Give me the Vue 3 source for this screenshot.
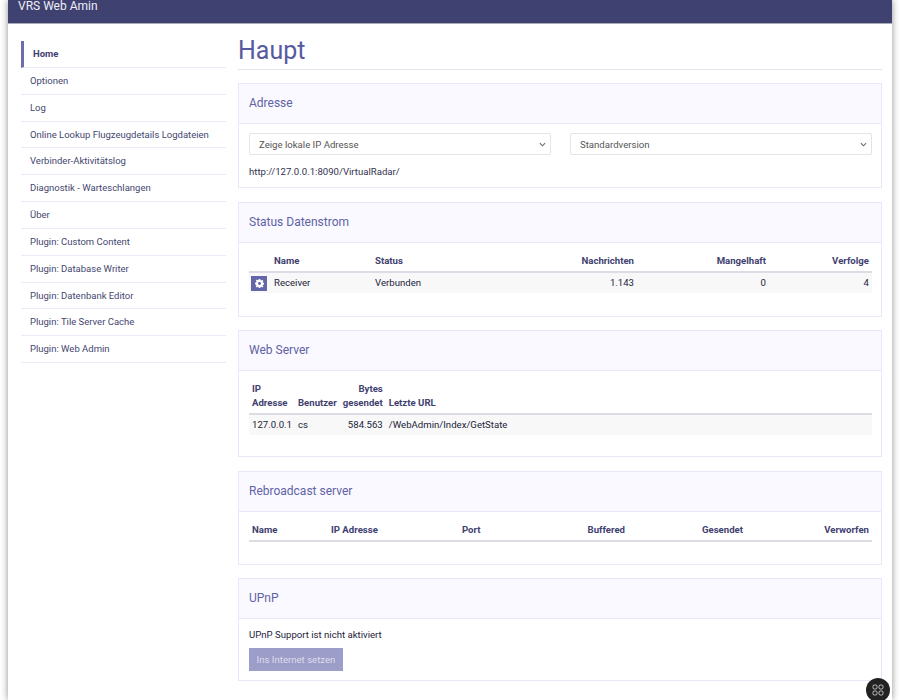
<script setup>
const navItems = [
  'Home', 'Optionen', 'Log', 'Online Lookup Flugzeugdetails Logdateien',
  'Verbinder-Aktivitätslog', 'Diagnostik - Warteschlangen', 'Über',
  'Plugin: Custom Content', 'Plugin: Database Writer', 'Plugin: Datenbank Editor',
  'Plugin: Tile Server Cache', 'Plugin: Web Admin'
]
</script>

<template>
  <div class="page">
    <header class="topbar"><span class="brand">VRS Web Amin</span></header>
    <div class="layout">
      <nav class="side">
        <a v-for="(item, i) in navItems" :key="item" class="nav" :class="{ active: i === 0 }">{{ item }}</a>
      </nav>
      <main class="main">
        <h1 class="title">Haupt</h1>

        <section class="panel p-addr">
          <h2 class="phead">Adresse</h2>
          <div class="pbody">
            <div class="selects">
              <select class="sel"><option>Zeige lokale IP Adresse</option></select>
              <select class="sel"><option>Standardversion</option></select>
            </div>
            <p class="url">http://127.0.0.1:8090/VirtualRadar/</p>
          </div>
        </section>

        <section class="panel p-status">
          <h2 class="phead">Status Datenstrom</h2>
          <div class="pbody">
            <table class="tbl fixed">
              <colgroup>
                <col class="c-icon" /><col class="c-name" /><col class="c-stat" />
                <col class="c-num" /><col class="c-num" /><col class="c-last" />
              </colgroup>
              <thead>
                <tr><th></th><th>Name</th><th>Status</th><th class="r">Nachrichten</th><th class="r">Mangelhaft</th><th class="r">Verfolge</th></tr>
              </thead>
              <tbody>
                <tr>
                  <td class="icell">
                    <span class="gear">
                      <svg viewBox="0 0 16 16" width="9" height="9" aria-hidden="true">
                        <path fill="#fff" fill-rule="evenodd" d="M6.6 0h2.8l.4 2.2 1.2.5 1.9-1.3 2 2-1.3 1.9.5 1.2 2.2.4v2.8l-2.2.4-.5 1.2 1.3 1.9-2 2-1.9-1.3-1.2.5-.4 2.2H6.6l-.4-2.2-1.2-.5-1.9 1.3-2-2 1.3-1.9-.5-1.2L0 9.4V6.6l2.2-.4.5-1.2-1.3-1.9 2-2 1.9 1.3 1.2-.5zM8 5.4a2.6 2.6 0 1 0 0 5.2 2.6 2.6 0 0 0 0-5.2z" />
                      </svg>
                    </span>
                  </td>
                  <td>Receiver</td><td>Verbunden</td><td class="r">1.143</td><td class="r">0</td><td class="r">4</td>
                </tr>
              </tbody>
            </table>
          </div>
        </section>

        <section class="panel p-web">
          <h2 class="phead">Web Server</h2>
          <div class="pbody">
            <table class="tbl">
              <thead>
                <tr><th class="shrink">IP<br />Adresse</th><th class="shrink">Benutzer</th><th class="r shrink">Bytes<br />gesendet</th><th>Letzte URL</th></tr>
              </thead>
              <tbody>
                <tr><td>127.0.0.1</td><td>cs</td><td class="r">584.563</td><td>/WebAdmin/Index/GetState</td></tr>
              </tbody>
            </table>
          </div>
        </section>

        <section class="panel p-rebro">
          <h2 class="phead">Rebroadcast server</h2>
          <div class="pbody">
            <table class="tbl fixed">
              <colgroup>
                <col class="r-1" /><col class="r-2" /><col class="r-3" />
                <col class="r-4" /><col class="r-5" /><col class="r-6" />
              </colgroup>
              <thead>
                <tr><th>Name</th><th>IP Adresse</th><th>Port</th><th class="r">Buffered</th><th class="r">Gesendet</th><th class="r">Verworfen</th></tr>
              </thead>
            </table>
          </div>
        </section>

        <section class="panel p-upnp">
          <h2 class="phead">UPnP</h2>
          <div class="pbody">
            <p class="note">UPnP Support ist nicht aktiviert</p>
            <button class="btn" type="button">Ins Internet setzen</button>
          </div>
        </section>
      </main>
    </div>
    <div class="fab" aria-hidden="true">
      <svg viewBox="0 0 12 12" width="12" height="12" fill="none" stroke="#c4c4c4" stroke-width="1">
        <rect x="1" y="1" width="4" height="4" rx="1.3" />
        <rect x="7" y="1" width="4" height="4" rx="1.3" />
        <rect x="1" y="7" width="4" height="4" rx="1.3" />
        <rect x="7" y="7" width="4" height="4" rx="1.3" />
      </svg>
    </div>
  </div>
</template>

<style>
html, body { margin: 0; background: #fff; overflow: hidden; }
</style>

<style scoped>
.page {
  position: relative;
  width: 884px;
  height: 700px;
  margin: 0 8px;
  background: #fff;
  box-shadow: 0 0 7px rgba(0, 0, 0, 0.45);
  font-family: Roboto, "Liberation Sans", sans-serif;
  font-size: 9.6px;
  color: #23233a;
  overflow: hidden;
}
.topbar {
  height: 23px;
  background: #3f4170;
  border-bottom: 1px solid #a9a9b8;
  padding-left: 10px;
}
.brand { display: block; color: #eeeef6; font-size: 12px; line-height: 13px; }
.layout { display: flex; padding: 17px 10px 0 13px; gap: 12px; }
.side { width: 205px; flex: none; display: flex; flex-direction: column; }
.nav {
  display: block;
  height: 25.85px;
  line-height: 25.85px;
  padding-left: 9px;
  font-size: 9.5px;
  color: #44466f;
  border-bottom: 1px solid #ebebf7;
}
.nav.active {
  border-left: 3px solid #6b6eaa;
  padding-left: 9px;
  font-weight: 700;
  color: #3f4170;
}
.main { width: 644px; flex: none; }
.title {
  margin: -5px 0 13px;
  height: 33px;
  font-size: 25px;
  line-height: 30px;
  font-weight: 400;
  color: #575aa0;
  border-bottom: 1px solid #e3e3ee;
}
.panel {
  box-sizing: border-box;
  border: 1px solid #e8e8fb;
  margin-bottom: 14px;
}
.p-addr { height: 105px; }
.p-status { height: 115px; margin-bottom: 13px; }
.p-web { height: 127px; }
.p-rebro { height: 94px; margin-bottom: 13px; }
.p-upnp { height: 103px; }
.phead {
  margin: 0;
  height: 40px;
  line-height: 39px;
  padding-left: 10px;
  box-sizing: border-box;
  background: #f9f9ff;
  border-bottom: 1px solid #e8e8fb;
  font-size: 12px;
  font-weight: 400;
  color: #5f62a5;
}
.pbody { padding: 9px 9px 0 10px; }
.selects { display: grid; grid-template-columns: 1fr 1fr; gap: 19px; }
.sel {
  appearance: none;
  height: 22px;
  width: 100%;
  padding: 0 9px;
  font: 9.6px Roboto, sans-serif;
  color: #555;
  background: #fff url("data:image/svg+xml,%3Csvg xmlns='http://www.w3.org/2000/svg' viewBox='0 0 8 5'%3E%3Cpath d='M1 1l3 3 3-3' fill='none' stroke='%23666' stroke-width='1.2'/%3E%3C/svg%3E") no-repeat right 4px center / 7px 5px;
  border: 1px solid #e4e4e4;
  border-radius: 2px;
}
.url { margin: 10px 0 0; line-height: 14px; color: #33344f; }
.tbl { width: 100%; border-collapse: collapse; font-size: 9.6px; }
.fixed { table-layout: fixed; }
.tbl th {
  padding: 0 3px 3px;
  line-height: 14px;
  text-align: left;
  vertical-align: bottom;
  font-weight: 700;
  color: #3f4170;
  border-bottom: 2px solid #dcdce4;
}
.tbl td { padding: 0 3px 1px; height: 19px; color: #23233a; background: #f8f8f8; }
.p-web .tbl td { height: 18px; padding-bottom: 2px; }
.tbl .r { text-align: right; }
.shrink { width: 1px; white-space: nowrap; }
.p-status .pbody, .p-web .pbody, .p-rebro .pbody { padding-top: 11px; }
.c-icon { width: 22px; }
.c-name { width: 101px; }
.c-stat { width: 133px; }
.c-num { width: 132px; }
.c-last { width: 103px; }
.r-1 { width: 79px; }
.r-2 { width: 131px; }
.r-3 { width: 80px; }
.r-4 { width: 89px; }
.r-5 { width: 118px; }
.r-6 { width: 126px; }
.tbl .icell { padding: 0 0 0 2px; }
.gear {
  display: flex;
  align-items: center;
  justify-content: center;
  width: 16px;
  height: 15px;
  background: #6366a8;
}
.note { margin: 0; line-height: 14px; color: #23233a; }
.btn {
  display: block;
  margin-top: 6px;
  width: 94px;
  height: 23px;
  padding: 0;
  border: 0;
  background: #9c9dc8;
  color: #dcdcec;
  font: 9.6px Roboto, sans-serif;
}
.fab {
  position: absolute;
  right: 2px;
  top: 678px;
  width: 24px;
  height: 24px;
  border-radius: 50%;
  background: #222;
  display: flex;
  align-items: center;
  justify-content: center;
}
</style>
